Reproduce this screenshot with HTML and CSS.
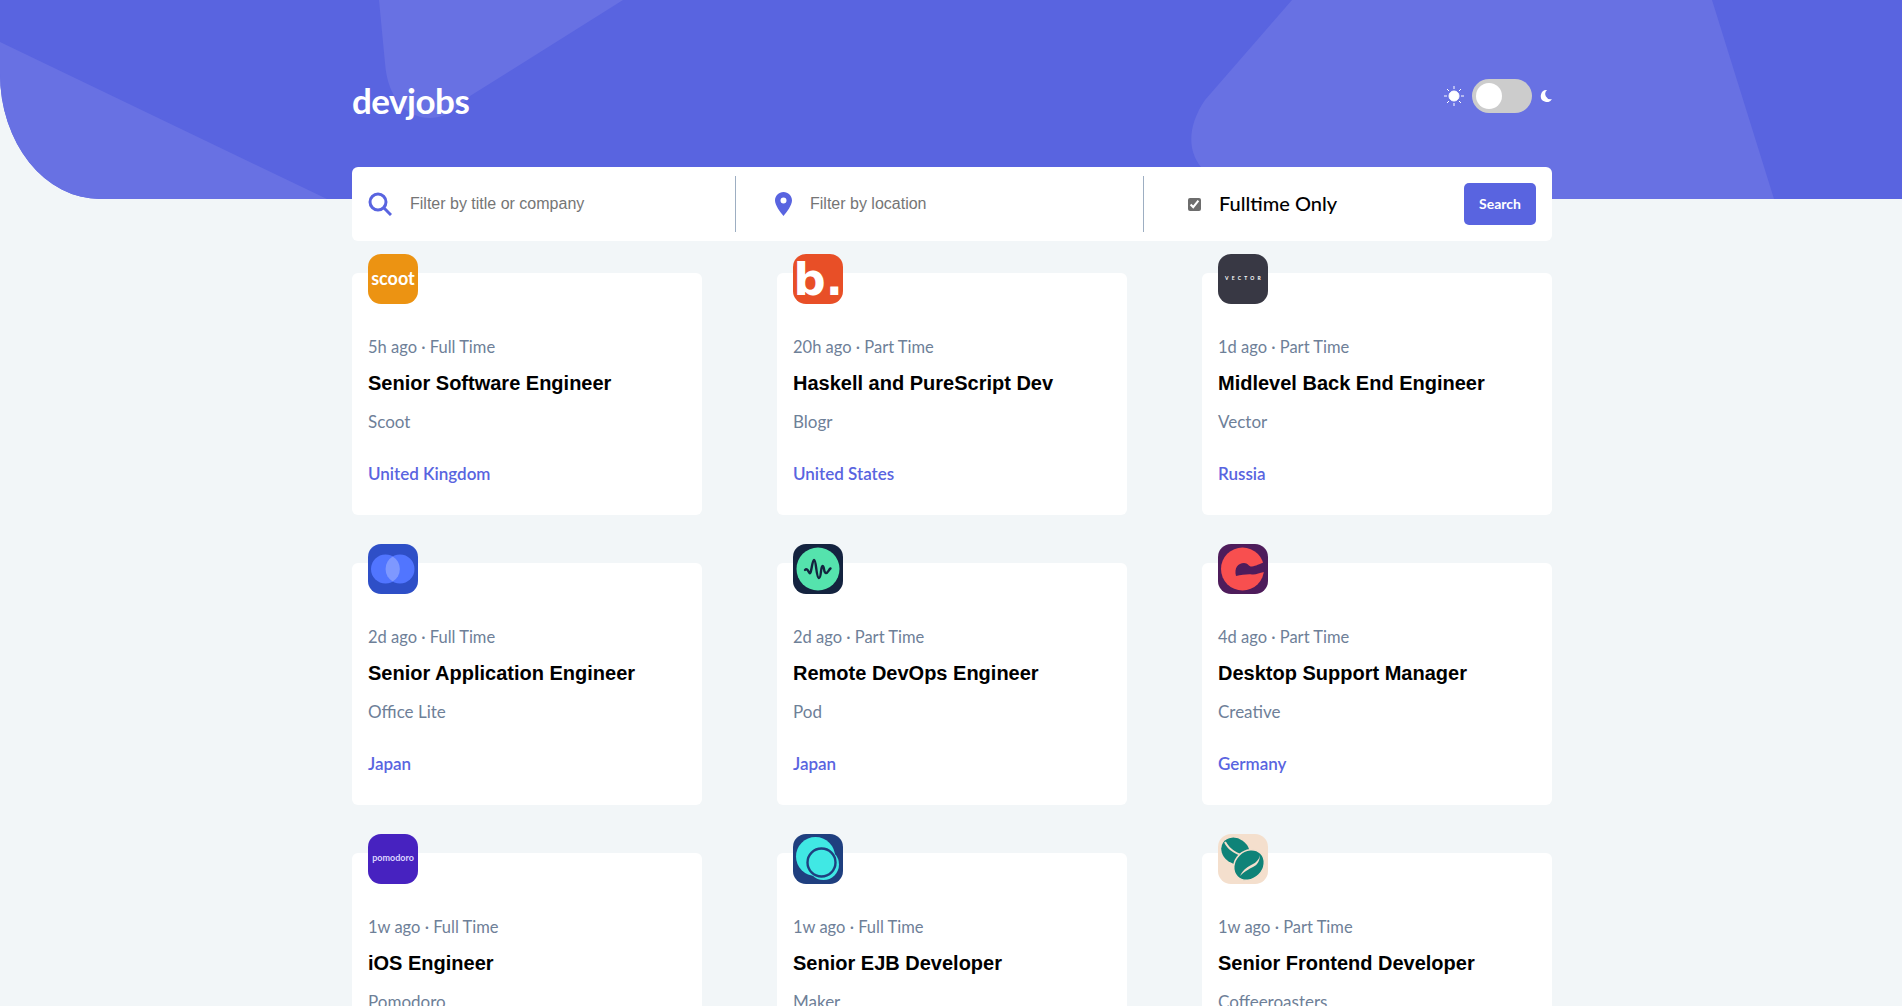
FILE: index.html
```html
<!DOCTYPE html>
<html>
<head>
    <title>devjobs</title>
    <link rel="stylesheet" href="styles.css">
</head>
<body>
    <!-- the purple header with the background shapes -->
    <header class="header">
        <svg class="header-shapes" width="1902" height="199" viewBox="0 0 1902 199">
            <path d="M0 42L327 199H0Z"/>
            <path d="M379 0L385 63C388 105 415 126 445 115C455 111 462 104 470 96L623 0Z"/>
            <path d="M1292 0L1205 100C1188 125 1187 150 1201 167L1222 199H1774L1712 0Z"/>
        </svg>
        <div class="header-row">
            <div class="brand">devjobs</div>
            <div class="theme-toggle">
                <svg class="sun" width="20" height="20" viewBox="0 0 20 20">
                    <circle cx="10" cy="10" r="5"/>
                    <path d="M10 0V3M10 17V20M0 10H3M17 10H20M3 3L5 5M15 15L17 17M3 17L5 15M15 5L17 3"/>
                </svg>
                <div class="switch"><span class="knob"></span></div>
                <svg class="moon" width="12" height="12" viewBox="0 0 12 12">
                    <path d="M7 0A6 6 0 1 0 12 9A5.3 5.3 0 0 1 7 0Z"/>
                </svg>
            </div>
        </div>
    </header>

    <main class="page">
        <!-- the filter bar -->
        <form class="filter-bar">
            <div class="filter filter-title">
                <svg width="24" height="24" viewBox="0 0 24 24">
                    <circle cx="10" cy="10" r="8" class="icon-line"/>
                    <path d="M16 16L23 23" class="icon-line"/>
                </svg>
                <input class="filter-input" type="text" placeholder="Filter by title or company">
            </div>
            <div class="filter filter-location">
                <svg width="17" height="24" viewBox="0 0 17 24">
                    <path fill-rule="evenodd" class="icon-fill" d="M8.5 0C13.2 0 17 3.8 17 8.5C17 13 12 20 8.5 24C5 20 0 13 0 8.5C0 3.8 3.8 0 8.5 0ZM8.5 5.5A3 3 0 1 0 8.5 11.5A3 3 0 1 0 8.5 5.5Z"/>
                </svg>
                <input class="filter-input" type="text" placeholder="Filter by location">
            </div>
            <div class="filter filter-check">
                <label class="fulltime"><input class="fulltime-box" type="checkbox" checked> Fulltime Only</label>
                <a class="search-button" href="#">Search</a>
            </div>
        </form>

        <!-- the job cards -->
        <section class="jobs">
            <article class="card">
                <svg class="logo" viewBox="0 0 50 50">
                    <rect width="50" height="50" fill="#ec9312"/>
                    <text x="25" y="30.5" class="logo-text scoot">scoot</text>
                </svg>
                <p class="meta">5h ago · Full Time</p>
                <h2 class="job-title">Senior Software Engineer</h2>
                <p class="company">Scoot</p>
                <p class="place">United Kingdom</p>
            </article>
            <article class="card">
                <svg class="logo" viewBox="0 0 50 50">
                    <rect width="50" height="50" fill="#e84f27"/>
                    <text x="0.5" y="41" class="logo-text blogr">b.</text>
                </svg>
                <p class="meta">20h ago · Part Time</p>
                <h2 class="job-title">Haskell and PureScript Dev</h2>
                <p class="company">Blogr</p>
                <p class="place">United States</p>
            </article>
            <article class="card">
                <svg class="logo" viewBox="0 0 50 50">
                    <rect width="50" height="50" fill="#383844"/>
                    <text x="26.5" y="26" class="logo-text vector">VECTOR</text>
                </svg>
                <p class="meta">1d ago · Part Time</p>
                <h2 class="job-title">Midlevel Back End Engineer</h2>
                <p class="company">Vector</p>
                <p class="place">Russia</p>
            </article>
            <article class="card">
                <svg class="logo" viewBox="0 0 50 50">
                    <rect width="50" height="50" fill="#2e4fc7"/>
                    <circle cx="17.5" cy="25" r="14.5" fill="#5175ff"/>
                    <circle cx="32" cy="25" r="14.5" fill="#5175ff"/>
                    <path d="M24.7 12.5A14.5 14.5 0 0 1 24.7 37.5A14.5 14.5 0 0 1 24.7 12.5Z" fill="#7e98ff"/>
                </svg>
                <p class="meta">2d ago · Full Time</p>
                <h2 class="job-title">Senior Application Engineer</h2>
                <p class="company">Office Lite</p>
                <p class="place">Japan</p>
            </article>
            <article class="card">
                <svg class="logo" viewBox="0 0 50 50">
                    <rect width="50" height="50" fill="#14233f"/>
                    <circle cx="25" cy="25" r="21.5" fill="#55e3ad"/>
                    <path d="M12 26C14 24 15 27 16.5 29C18.5 31 19 16 21 16C23.5 16 23 34 26 34C28.5 34 27.5 22 29.5 22C31.5 22 30.5 29 33 29C35 29 36 25 37.5 24.5" fill="none" stroke="#14233f" stroke-width="2.4" stroke-linecap="round"/>
                </svg>
                <p class="meta">2d ago · Part Time</p>
                <h2 class="job-title">Remote DevOps Engineer</h2>
                <p class="company">Pod</p>
                <p class="place">Japan</p>
            </article>
            <article class="card">
                <svg class="logo" viewBox="0 0 50 50">
                    <rect width="50" height="50" fill="#4e1c5b"/>
                    <circle cx="24.5" cy="25" r="21.5" fill="#f84f4f"/>
                    <path d="M18 32C16 24 20 19 26 19C30 19 31 23 34 22.5C38 22 41 20 47 18L46 28C41 29 38 31 34 30.5C29 30 24 31 18 32Z" fill="#4e1c5b"/>
                </svg>
                <p class="meta">4d ago · Part Time</p>
                <h2 class="job-title">Desktop Support Manager</h2>
                <p class="company">Creative</p>
                <p class="place">Germany</p>
            </article>
            <article class="card">
                <svg class="logo" viewBox="0 0 50 50">
                    <rect width="50" height="50" fill="#4722c0"/>
                    <text x="25" y="27" class="logo-text pomodoro">pomodoro</text>
                </svg>
                <p class="meta">1w ago · Full Time</p>
                <h2 class="job-title">iOS Engineer</h2>
                <p class="company">Pomodoro</p>
                <p class="place">United States</p>
            </article>
            <article class="card">
                <svg class="logo" viewBox="0 0 50 50">
                    <rect width="50" height="50" fill="#1f3f7f"/>
                    <circle cx="22.5" cy="22.5" r="19.5" fill="#40e8e4"/>
                    <circle cx="30.5" cy="30.5" r="15.5" fill="#40e8e4"/>
                    <circle cx="28.5" cy="28.5" r="14" fill="#40e8e4" stroke="#1f3f7f" stroke-width="2.4"/>
                </svg>
                <p class="meta">1w ago · Full Time</p>
                <h2 class="job-title">Senior EJB Developer</h2>
                <p class="company">Maker</p>
                <p class="place">United Kingdom</p>
            </article>
            <article class="card">
                <svg class="logo" viewBox="0 0 50 50">
                    <rect width="50" height="50" fill="#f4dfcd"/>
                    <ellipse cx="17.5" cy="17" rx="15" ry="12.5" transform="rotate(35 17.5 17)" fill="#0f8378"/>
                    <path d="M7 8C11 16 18 20 32 24" fill="none" stroke="#f4dfcd" stroke-width="2"/>
                    <ellipse cx="31" cy="31" rx="16.5" ry="14" transform="rotate(-45 31 31)" fill="#0f8378" stroke="#f4dfcd" stroke-width="1.5"/>
                    <path d="M22 42C26 34 30 33 35 30C39 28 42 24 42 20C42 26 40 31 35 33C31 35 27 37 22 42Z" fill="#f4dfcd"/>
                </svg>
                <p class="meta">1w ago · Part Time</p>
                <h2 class="job-title">Senior Frontend Developer</h2>
                <p class="company">Coffeeroasters</p>
                <p class="place">Singapore</p>
            </article>
        </section>
    </main>
</body>
</html>
```
FILE: styles.css
```css
/* Page */
html, body {
    height: 100%;
    overflow: hidden;
}

body {
    margin: 0;
    background: #f2f6f8;
    font-family: Lato, sans-serif;
}

p, h2 {
    margin: 0;
}

/* Header */
.header {
    position: relative;
    height: 199px;
    background: #5964e0;
    border-bottom-left-radius: 100px 125px;
    overflow: hidden;
}

.header-shapes {
    position: absolute;
    top: 0;
    left: 0;
    fill: #6871e3;
}

.header-row {
    position: relative;
    box-sizing: border-box;
    display: flex;
    justify-content: space-between;
    width: 1200px;
    margin-left: 352px;
    padding-top: 79px;
}

.brand {
    color: #fff;
    font-size: 35px;
    font-weight: 700;
    line-height: 42px;
    letter-spacing: -0.5px;
}

/* Theme switch */
.theme-toggle {
    display: flex;
    align-items: center;
    height: 34px;
}

.sun {
    margin-right: 8px;
    fill: #fff;
    stroke: #fff;
    stroke-width: 1;
}

.moon {
    margin-left: 8px;
    fill: #fff;
}

.switch {
    box-sizing: border-box;
    width: 60px;
    height: 34px;
    padding: 4px;
    background: #ccc;
    border-radius: 34px;
}

.knob {
    display: block;
    width: 26px;
    height: 26px;
    background: #fff;
    border-radius: 50%;
}

/* Filter bar */
.page {
    width: 1200px;
    margin-left: 352px;
}

.filter-bar {
    position: relative;
    box-sizing: border-box;
    display: flex;
    height: 74px;
    margin-top: -32px;
    padding: 9px 0;
    background: #fff;
    border-radius: 6px;
}

.filter {
    display: flex;
    align-items: center;
    box-sizing: border-box;
}

.filter-title {
    width: 384px;
    padding-left: 16px;
    border-right: 1px solid #9daec2;
}

.filter-location {
    width: 408px;
    padding-left: 39px;
    border-right: 1px solid #9daec2;
}

.filter-check {
    flex: 1;
    padding: 0 16px 0 44px;
    justify-content: space-between;
}

.filter-input {
    flex: 1;
    margin-left: 18px;
    padding: 0;
    border: 0;
    outline: 0;
    font-family: "Liberation Sans", Arial, sans-serif;
    font-size: 16px;
}

.icon-line {
    fill: none;
    stroke: #5964e0;
    stroke-width: 3;
}

.icon-fill {
    fill: #5964e0;
}

.fulltime {
    display: flex;
    align-items: center;
    margin-bottom: 2px;
    color: #000;
    font-size: 20px;
    font-weight: 500;
}

.fulltime-box {
    width: 13px;
    height: 13px;
    margin: 2px 18px 0 0;
    accent-color: #6d6d6d;
}

.search-button {
    width: 72px;
    height: 42px;
    color: #fff;
    background: #5964e0;
    border-radius: 5px;
    font-size: 14px;
    font-weight: 700;
    line-height: 42px;
    text-align: center;
    text-decoration: none;
}

/* Job cards */
.jobs {
    display: grid;
    grid-template-columns: repeat(3, 350px);
    gap: 48px 75px;
    margin-top: 32px;
}

.card {
    box-sizing: border-box;
    height: 242px;
    padding: 0 16px;
    background: #fff;
    border-radius: 6px;
}

.logo {
    display: block;
    width: 50px;
    height: 50px;
    margin-top: -19px;
    border-radius: 13px;
}

.logo-text {
    text-anchor: middle;
    font-family: Lato, sans-serif;
    font-weight: 700;
}

.scoot {
    fill: #fff;
    font-size: 18px;
}

.blogr {
    text-anchor: start;
    fill: #fff;
    font-family: "DejaVu Sans", sans-serif;
    font-size: 45px;
}

.vector {
    fill: #fff;
    font-size: 5px;
    letter-spacing: 3.2px;
}

.pomodoro {
    fill: #dcd5ff;
    font-size: 9px;
}

.meta {
    margin-top: 33px;
    color: #6e8098;
    font-size: 16.5px;
    line-height: 20px;
}

.job-title {
    margin-top: 14px;
    color: #000;
    font-family: "Liberation Sans", Arial, sans-serif;
    font-size: 20px;
    font-weight: 700;
    line-height: 24px;
}

.company {
    margin-top: 17px;
    color: #6e8098;
    font-size: 17px;
    line-height: 20px;
}

.place {
    margin-top: 32px;
    color: #5964e0;
    font-size: 17px;
    font-weight: 600;
    line-height: 20px;
}
```
